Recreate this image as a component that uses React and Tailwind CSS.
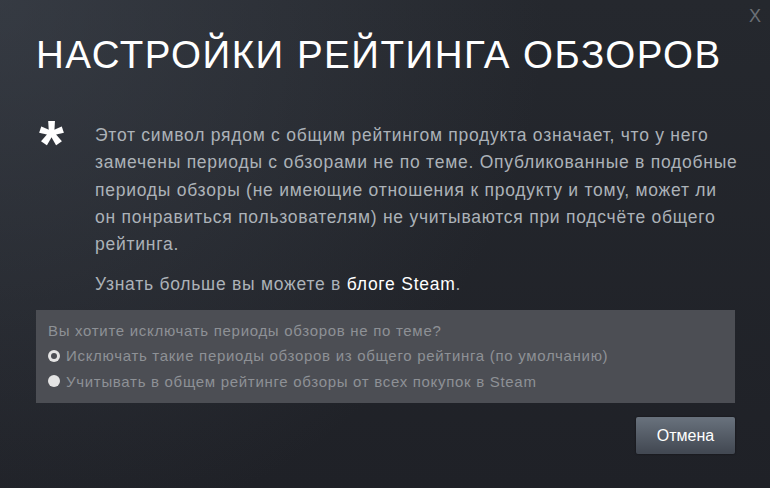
import { useState } from 'react'

const options = [
  'Исключать такие периоды обзоров из общего рейтинга (по умолчанию)',
  'Учитывать в общем рейтинге обзоры от всех покупок в Steam',
]

function Radio({ checked }) {
  return (
    <span className="relative mr-[6px] inline-block h-[12px] w-[12px] shrink-0 rounded-full bg-[#e4e4e4]">
      {checked && (
        <span className="absolute left-[3px] top-[3px] h-[6px] w-[6px] rounded-full bg-[#4c4e54]" />
      )}
    </span>
  )
}

export default function App() {
  const [choice, setChoice] = useState(0)

  return (
    <div
      className="relative h-[488px] w-[770px] overflow-hidden bg-[radial-gradient(circle_at_top_left,rgba(74,81,92,0.45)_0%,rgba(75,81,92,0)_60%),linear-gradient(#25282e,#1f2127)] font-['Liberation_Sans',Arial,sans-serif]"
    >
      {/* close */}
      <div className="absolute right-[9px] top-[7px] text-[18px] leading-none text-[#6b6f75]">X</div>

      <div className="px-[36px] pt-[35px]">
        <h1 className="text-[38.5px] font-normal uppercase leading-[40px] tracking-[1.5px] text-white">
          Настройки рейтинга обзоров
        </h1>

        <div className="mt-[44px] flex">
          <div className="w-[59px] shrink-0 pl-[3px] text-[64px] font-bold leading-[50px] text-white">*</div>
          <div className="whitespace-nowrap pt-[3px] text-[17.5px] leading-[27.25px] tracking-[0.75px] text-[#acb2b8]">
            <p>
              Этот символ рядом с общим рейтингом продукта означает, что у него
              <br />
              замечены периоды с обзорами не по теме. Опубликованные в подобные
              <br />
              периоды обзоры (не имеющие отношения к продукту и тому, может ли
              <br />
              он понравиться пользователям) не учитываются при подсчёте общего
              <br />
              рейтинга.
            </p>
            <p className="mt-[13px]">
              Узнать больше вы можете в <span className="text-white">блоге Steam</span>.
            </p>
          </div>
        </div>

        <div className="mt-[11px] w-[699px] bg-[#4c4e54] px-[12px] pb-[9px] pt-[8px] text-[15px] leading-[25.5px] tracking-[0.7px] text-[#8e9196]">
          <div>Вы хотите исключать периоды обзоров не по теме?</div>
          {options.map((label, i) => (
            <label key={i} className="flex cursor-pointer items-center" onClick={() => setChoice(i)}>
              <Radio checked={choice === i} />
              {label}
            </label>
          ))}
        </div>

        <div className="mt-[14px] flex w-[699px] justify-end">
          <button className="h-[37px] w-[99px] rounded-[2px] bg-[linear-gradient(to_bottom,#67707b_5%,#434953_95%)] text-[16px] text-white shadow-[0_0_2px_rgba(0,0,0,0.6)]">
            Отмена
          </button>
        </div>
      </div>
    </div>
  )
}
